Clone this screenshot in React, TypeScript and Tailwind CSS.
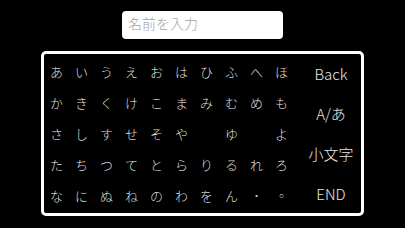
import React from "react";

const rows: string[][] = [
  ["あ", "い", "う", "え", "お", "は", "ひ", "ふ", "へ", "ほ"],
  ["か", "き", "く", "け", "こ", "ま", "み", "む", "め", "も"],
  ["さ", "し", "す", "せ", "そ", "や", "", "ゆ", "", "よ"],
  ["た", "ち", "つ", "て", "と", "ら", "り", "る", "れ", "ろ"],
  ["な", "に", "ぬ", "ね", "の", "わ", "を", "ん", "･", "◦"],
];

const actions = ["Back", "A/あ", "小文字", "END"];

export default function App() {
  return (
    <div
      className="w-[405px] h-[228px] bg-black flex flex-col items-center pt-[11px] font-light"
      style={{ fontFamily: '"Noto Sans CJK JP", "Noto Sans", sans-serif' }}
    >
      <div className="w-[161px] h-[28px] bg-white rounded-[4px] pl-[6px] pt-[2px] text-[14px] leading-[20px] text-[#a3a3a3]">
        名前を入力
      </div>
      <div className="mt-[12px] w-[323px] h-[165px] border-[3px] border-white rounded-[5px] flex">
        <div className="w-[250px] grid grid-cols-10 grid-rows-5 py-[2px]">
          {rows.flat().map((k, i) => (
            <div
              key={i}
              className={
                "flex items-center justify-center leading-none text-[#dcdcdc] " +
                (i === 48 ? "text-[13px] text-[#9a9a9a]" : i === 49 ? "text-[12px]" : "text-[13px]")
              }
            >
              {k}
            </div>
          ))}
        </div>
        <div className="flex-1 pl-[7px] flex flex-col">
          {actions.map((a) => (
            <div
              key={a}
              className="flex-1 flex items-center justify-center text-[15px] leading-none text-[#e6e6e6]"
            >
              {a}
            </div>
          ))}
        </div>
      </div>
    </div>
  );
}
